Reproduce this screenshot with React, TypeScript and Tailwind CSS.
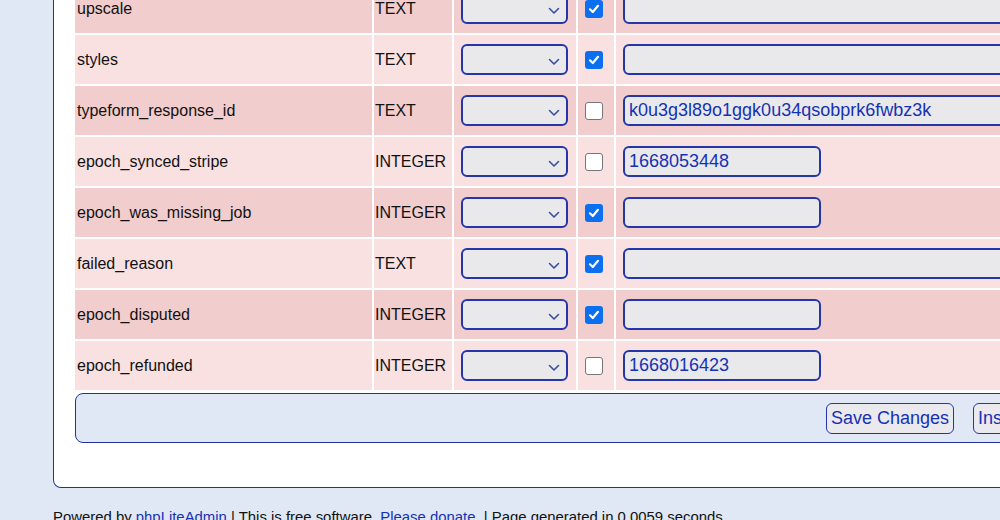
const rows = [
  { name: "upscale", type: "TEXT", checked: true, value: "", wide: true },
  { name: "styles", type: "TEXT", checked: true, value: "", wide: true },
  { name: "typeform_response_id", type: "TEXT", checked: false, value: "k0u3g3l89o1ggk0u34qsobprk6fwbz3k", wide: true },
  { name: "epoch_synced_stripe", type: "INTEGER", checked: false, value: "1668053448", wide: false },
  { name: "epoch_was_missing_job", type: "INTEGER", checked: true, value: "", wide: false },
  { name: "failed_reason", type: "TEXT", checked: true, value: "", wide: true },
  { name: "epoch_disputed", type: "INTEGER", checked: true, value: "", wide: false },
  { name: "epoch_refunded", type: "INTEGER", checked: false, value: "1668016423", wide: false },
];

function Chevron() {
  return (
    <svg width="12" height="8" viewBox="0 0 12 8" className="absolute right-[6px] top-[12px]">
      <path d="M1.5 1.5 L6 6 L10.5 1.5" fill="none" stroke="#3a4f9c" strokeWidth="1.6" strokeLinecap="round" strokeLinejoin="round" />
    </svg>
  );
}

function Checkbox({ checked }: { checked: boolean }) {
  if (checked) {
    return (
      <div className="w-[18px] h-[18px] rounded-[3px] bg-[#0b6ff0] flex items-center justify-center">
        <svg width="12" height="12" viewBox="0 0 12 12">
          <path d="M2 6.3 L4.8 9 L10 2.8" fill="none" stroke="white" strokeWidth="2.2" strokeLinecap="round" strokeLinejoin="round" />
        </svg>
      </div>
    );
  }
  return <div className="w-[18px] h-[18px] rounded-[3px] bg-white border-[1.5px] border-[#767676]" />;
}

export default function App() {
  return (
    <div className="w-[1000px] h-[520px] overflow-hidden bg-[#dfe8f4] font-['Liberation_Sans',Arial,sans-serif] text-[#111]">
      <div className="ml-[53px] w-[1100px] -mt-[38px] bg-white border-x-[1.5px] border-b-[1.5px] border-[#2132a0] rounded-b-[8px] pl-[21px] pt-[22px] pb-[44px]">
        <div className="flex flex-col gap-[2px]">
          {rows.map((r, i) => {
            const bg = i % 2 === 0 ? "bg-[#f2cdcd]" : "bg-[#f9e1e1]";
            return (
              <div key={r.name} className="grid grid-cols-[297px_78px_122px_36px_1fr] gap-[2px] h-[49px] text-[16px]">
                <div className={`${bg} flex items-center pl-[2px]`}>{r.name}</div>
                <div className={`${bg} flex items-center pl-[1px]`}>{r.type}</div>
                <div className={`${bg} flex items-center pl-[7px]`}>
                  <div className="relative w-[107px] h-[31px] rounded-[6px] border-2 border-[#2537a8] bg-[#e9e9ec]">
                    <Chevron />
                  </div>
                </div>
                <div className={`${bg} flex items-center pl-[7px]`}>
                  <Checkbox checked={r.checked} />
                </div>
                <div className={`${bg} flex items-center pl-[7px]`}>
                  <div
                    className={`${r.wide ? "w-[460px]" : "w-[198px]"} h-[31px] rounded-[6px] border-2 border-[#2537a8] bg-[#e9e9ec] flex items-center pl-[4px] text-[18px] text-[#1632b4]`}
                  >
                    {r.value}
                  </div>
                </div>
              </div>
            );
          })}
        </div>
        <div className="mt-[3px] h-[50px] rounded-[8px] border-[1.5px] border-[#2132a0] bg-[#dfe8f4] flex items-center gap-[19px] pl-[750px]">
          <button className="h-[31px] px-[4px] rounded-[6px] border-[1.5px] border-[#2537a8] bg-[#e9e9ee] text-[18px] text-[#1632b4] leading-none">
            Save Changes
          </button>
          <button className="h-[31px] px-[4px] rounded-[6px] border-[1.5px] border-[#2537a8] bg-[#e9e9ee] text-[18px] text-[#1632b4] leading-none whitespace-nowrap">
            Insert As New Row
          </button>
        </div>
      </div>
      <div className="ml-[53px] mt-[18px] text-[14.9px] leading-[22px] whitespace-nowrap">
        Powered by <a className="text-[#1632b4]">phpLiteAdmin</a> | This is free software. <a className="text-[#1632b4]">Please donate.</a> | Page generated in 0.0059 seconds.
      </div>
    </div>
  );
}
